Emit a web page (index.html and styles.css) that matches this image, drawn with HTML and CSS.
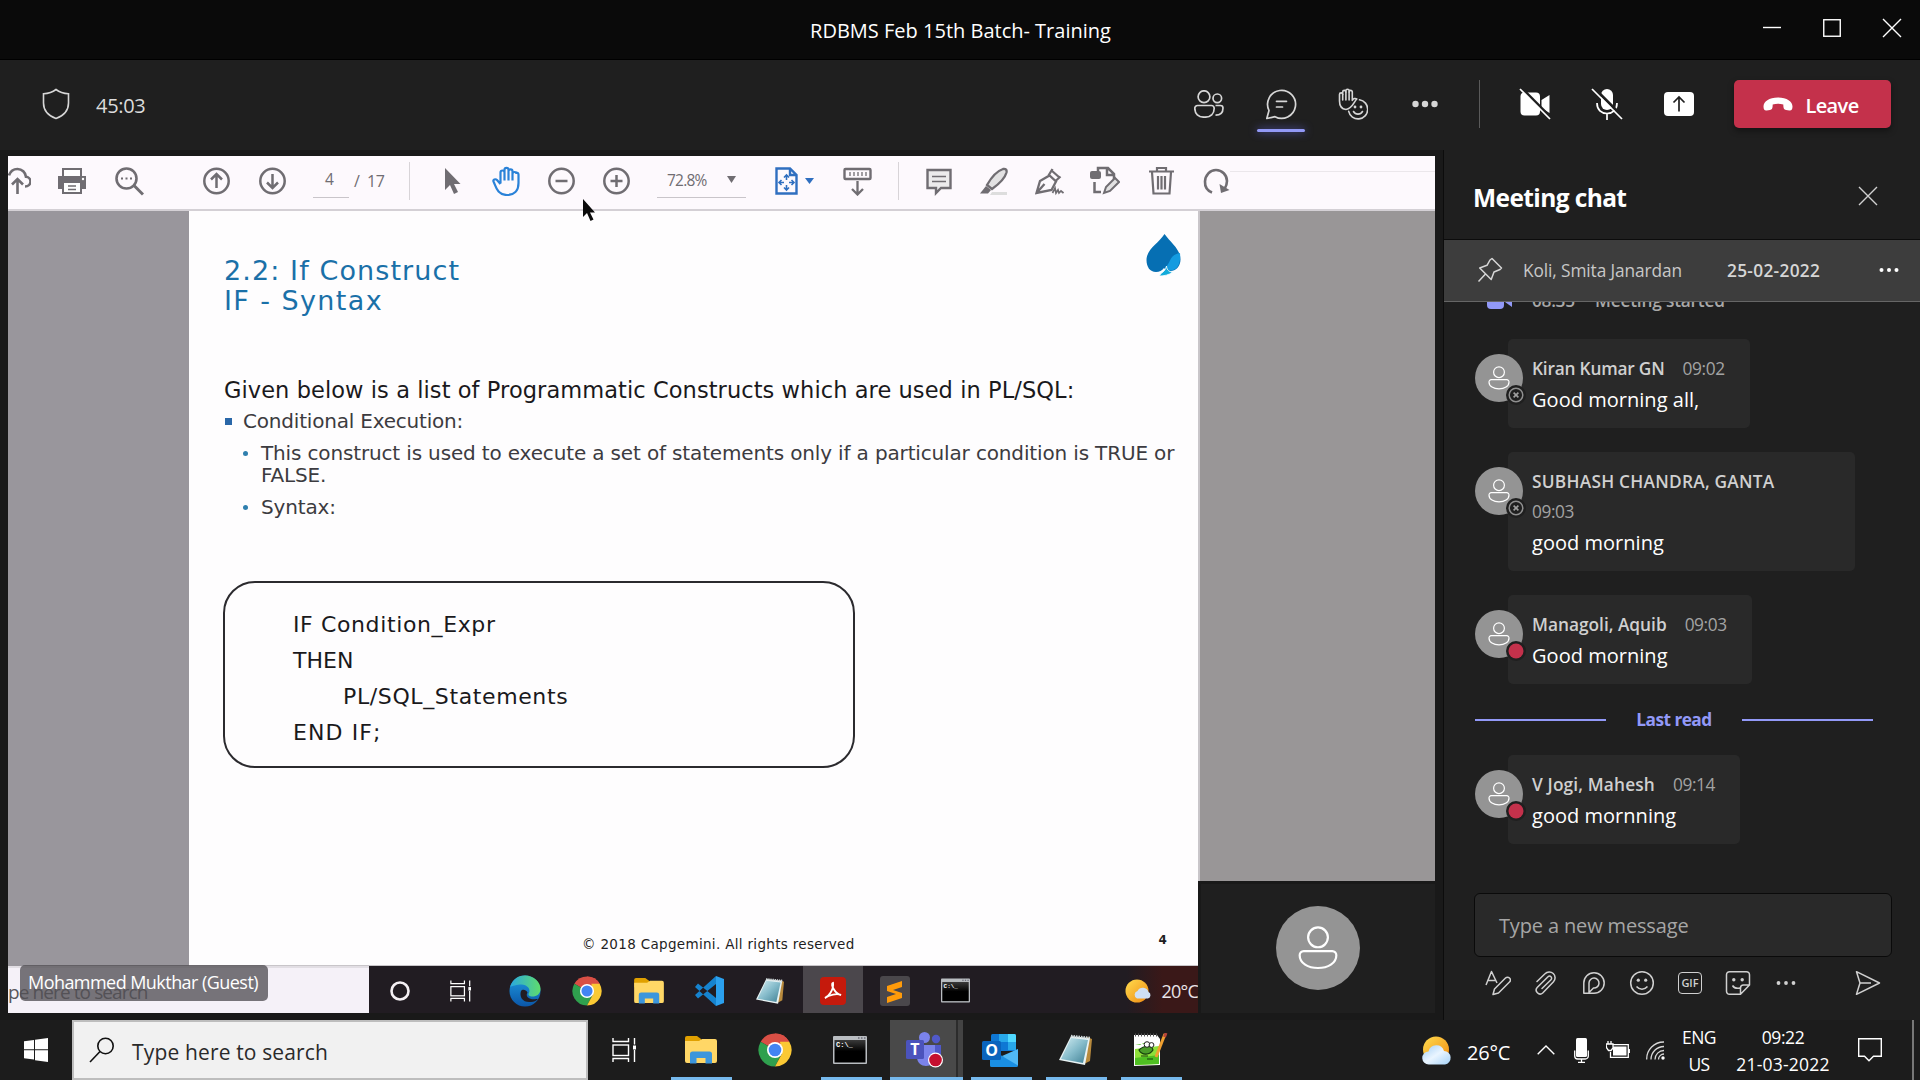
FILE: index.html
```
<!DOCTYPE html>
<html lang="en">
<head>
<meta charset="utf-8">
<title>RDBMS Feb 15th Batch- Training</title>
<link rel="stylesheet" href="styles.css">
</head>
<body>
<svg class="defs" width="0" height="0" aria-hidden="true">
  <defs>
    <linearGradient id="sun" x1="0" y1="0" x2="1" y2="1"><stop offset="0" stop-color="#ffdc4e"/><stop offset="1" stop-color="#f08a12"/></linearGradient>
    <linearGradient id="cloud" x1="0" y1="0" x2="1" y2="1"><stop offset="0" stop-color="#9fcdf5"/><stop offset=".5" stop-color="#eaf5ff"/><stop offset="1" stop-color="#a5d2f8"/></linearGradient>
    <linearGradient id="pad" x1="0" y1="0" x2="1" y2="1"><stop offset="0" stop-color="#d5eef3"/><stop offset=".5" stop-color="#86bccb"/><stop offset="1" stop-color="#3f7f93"/></linearGradient>
    <linearGradient id="edge1" x1="0" y1="0" x2="1" y2="0"><stop offset="0" stop-color="#2aa8e0"/><stop offset="1" stop-color="#5fdc6c"/></linearGradient>
    <linearGradient id="edge2" x1="0" y1="0" x2="0" y2="1"><stop offset="0" stop-color="#1f9be0"/><stop offset="1" stop-color="#0b56a8"/></linearGradient>
    <linearGradient id="cmdg" x1="0" y1="0" x2="0" y2="1"><stop offset="0" stop-color="#3a3a3a"/><stop offset=".5" stop-color="#000"/></linearGradient>
  </defs>
  <symbol id="person" viewBox="0 0 24 24"><g fill="none" stroke="#fff" stroke-width="1.2"><circle cx="12" cy="6.2" r="5.4"/><path d="M4.2 13.7h15.6a2.2 2.2 0 0 1 2.2 2.2c0 4.4-4.6 7-10 7s-10-2.6-10-7a2.2 2.2 0 0 1 2.2-2.2z"/></g></symbol>
  <symbol id="chrome" viewBox="0 0 34 34">
    <path d="M17 17 2.7 8.75A16.5 16.5 0 0 1 31.3 8.75z" fill="#d94f45"/>
    <path d="M17 .5A16.5 16.5 0 0 1 31.3 8.75H17z" fill="#d94f45"/>
    <path d="M2.7 8.75A16.5 16.5 0 0 0 17 33.5L23.5 21 17 17z" fill="#2fa04e"/>
    <path d="M31.3 8.75A16.5 16.5 0 0 1 17 33.5L24 20.5 22 8.75z" fill="#fbc934"/>
    <circle cx="17" cy="17" r="8" fill="#fff"/><circle cx="17" cy="17" r="6.3" fill="#4284f3"/>
  </symbol>
  <symbol id="folder" viewBox="0 0 32 28">
    <path d="M0 2a2 2 0 0 1 2-2h10l4 3v7H0z" fill="#e0a000"/><path d="M0 5h14l3-2h13a2 2 0 0 1 2 2v20a2 2 0 0 1-2 2H2a2 2 0 0 1-2-2z" fill="#ffd766"/>
    <path d="M5 27.500V18a2.500 2.500 0 0 1 2.500-2.500h17A2.500 2.500 0 0 1 27 18v9.500h-6.500V22h-9v5.500z" fill="#3c96dc"/>
  </symbol>
  <symbol id="cmd" viewBox="0 0 34 28">
    <rect width="34" height="28" rx="1" fill="#b9bdc1"/><rect x="1.500" y="4" width="31" height="22.500" fill="url(#cmdg)"/><path d="M25 2h1.500M28 2h1.500M31 2h1.500" stroke="#445"/>
    <text x="3" y="11" class="prompt">C:\_</text>
  </symbol>
  <symbol id="notepad" viewBox="0 0 33 32">
    <path d="M28 3l5 2-2 22-6 3z" fill="#b88a3d"/><path d="M12 2l19 2-5 27L0 26z" fill="#e9f3f4"/><path d="M12 4l17 2-5 23L2 25z" fill="url(#pad)"/><path d="M12 2l19 2" stroke="#cfd8da" stroke-width="2.500" stroke-dasharray="1.500 1"/>
  </symbol>
  <symbol id="taskview" viewBox="0 0 24 24"><g fill="none" stroke="#fff" stroke-width="1.400"><rect x="1" y="7" width="15.500" height="10.500"/><path d="M1 0v3.500h15.500V0M1 24v-3.500h15.500V24M22.500 0v6.500M22.500 12v12"/></g><rect x="21" y="7.500" width="3" height="4" fill="#fff"/></symbol>
  <symbol id="offline" viewBox="0 0 20 20"><circle cx="10" cy="10" r="10" fill="#1f1f1f"/><circle cx="10" cy="10" r="6.800" fill="none" stroke="#8f8f8f" stroke-width="1.500"/><path d="M7.600 7.600l4.800 4.800m0-4.800l-4.800 4.800" stroke="#a0a0a0" stroke-width="1.600"/></symbol>
  <symbol id="busy" viewBox="0 0 20 20"><circle cx="10" cy="10" r="10" fill="#1f1f1f"/><circle cx="10" cy="10" r="7.500" fill="#c4314b"/></symbol>
</svg>

<header class="titlebar">
  <h1 class="window-title">RDBMS Feb 15th Batch- Training</h1>
  <div class="window-buttons">
    <svg width="20" height="20" viewBox="0 0 20 20"><path d="M1 9.500h18" stroke="#fff" stroke-width="1.400"/></svg>
    <svg width="20" height="20" viewBox="0 0 20 20"><rect x="1.750" y="1.750" width="16.500" height="16.500" fill="none" stroke="#fff" stroke-width="1.400"/></svg>
    <svg width="20" height="20" viewBox="0 0 20 20"><path d="M1 1l18 18M19 1L1 19" stroke="#fff" stroke-width="1.400"/></svg>
  </div>
</header>

<nav class="callbar">
  <svg class="shield" width="28" height="32" viewBox="0 0 28 32"><path d="M14 1.500c3.500 2.700 7.500 4 12.500 4.200V15c0 7.500-4.500 12.500-12.500 15.500C6 27.500 1.500 22.500 1.500 15V5.700C6.500 5.500 10.500 4.200 14 1.500z" fill="none" stroke="#d6d6d6" stroke-width="1.600"/></svg>
  <span class="timer">45:03</span>
  <div class="call-actions">
    <span class="slot"><svg width="30" height="28" viewBox="0 0 30 28"><g fill="none" stroke="#d6d6d6" stroke-width="1.700"><circle cx="10" cy="6.700" r="5.900"/><circle cx="23.300" cy="8.300" r="4.300"/><path d="M3.500 15.500h14a2.700 2.700 0 0 1 2.700 2.700c0 5.500-3.500 9-9.700 9s-9.700-3.500-9.700-9a2.700 2.700 0 0 1 2.700-2.700zM21.500 15.500h5a2.500 2.500 0 0 1 2.500 2.500c0 4.500-2.800 7.200-7.500 7.200"/></g></svg></span>
    <span class="slot active"><svg width="32" height="32" viewBox="0 0 32 32"><g fill="none" stroke="#d6d6d6" stroke-width="1.700" stroke-linecap="round" stroke-linejoin="round"><path d="M4 22.500A14 14 0 1 1 10 28.700L1.800 30.500z"/><path d="M11.500 13.300h10M11.500 19h6"/></g></svg></span>
    <span class="slot"><svg width="30" height="32" viewBox="0 0 30 32"><g fill="none" stroke="#d6d6d6" stroke-width="1.600" stroke-linecap="round" stroke-linejoin="round"><path d="M8 21.500C3.500 21 1.500 17.500 1.500 13V6.500a1.600 1.600 0 0 1 3.200 0V4a1.600 1.600 0 0 1 3.200 0V2.800a1.600 1.600 0 0 1 3.200 0V4a1.600 1.600 0 0 1 3.200 0v8.500c1-2 3-2.600 4.500-1.500-2.500 2.200-4.300 9.500-10.800 10.500z"/><path d="M4.700 6.500V12M7.900 4v8M11.100 4v8"/><path d="M21.500 11.800a9.600 9.600 0 1 1-10.800 11.500"/><path d="M15.500 23.500c2 3.500 7 3.500 9 0"/></g><circle cx="17" cy="19" r="1.400" fill="#d6d6d6"/><circle cx="23" cy="19" r="1.400" fill="#d6d6d6"/></svg></span>
    <span class="slot"><svg width="28" height="8" viewBox="0 0 28 8"><g fill="#d6d6d6"><circle cx="4.500" cy="4" r="3.200"/><circle cx="14" cy="4" r="3.200"/><circle cx="23.500" cy="4" r="3.200"/></g></svg></span>
    <span class="divider"></span>
    <span class="slot"><svg width="32" height="32" viewBox="0 0 32 32"><path d="M5.500 4.500H17a4 4 0 0 1 4 4v15a4 4 0 0 1-4 4H5.500a4 4 0 0 1-4-4v-15a4 4 0 0 1 4-4zM22.500 12l8-5v18l-8-5z" fill="#fff"/><path d="M2.500 0L32 30" stroke="#1f1f1f" stroke-width="3"/><path d="M1 1l30 30" stroke="#fff" stroke-width="1.700"/></svg></span>
    <span class="slot"><svg width="32" height="32" viewBox="0 0 32 32"><rect x="10" y="1" width="12" height="21" rx="6" fill="#fff"/><path d="M6 15c0 7 4.500 10.500 10 10.500S26 22 26 15M16 25.500V32" fill="none" stroke="#fff" stroke-width="1.700"/><path d="M3 0l30 30" stroke="#1f1f1f" stroke-width="3"/><path d="M1 1l30 30" stroke="#fff" stroke-width="1.700"/></svg></span>
    <span class="slot"><svg width="30" height="24" viewBox="0 0 30 24"><rect width="30" height="24" rx="4" fill="#fff"/><path d="M15 19.500V5.500M9.500 10.500L15 5l5.500 5.500" fill="none" stroke="#1f1f1f" stroke-width="1.700"/></svg></span>
    <button class="leave"><svg width="30" height="14" viewBox="0 0 30 14"><path d="M15 .5C24 .5 29.500 4.500 29.500 9.500c0 3-1 4.300-3.200 4L23 13c-1.800-.3-2.500-1.500-2.600-3.500l-.1-2C17 6.500 13 6.500 9.700 7.500l-.1 2C9.500 11.500 8.800 12.700 7 13l-3.300.5C1.500 13.800.5 12.500.5 9.500.5 4.500 6 .5 15 .5z" fill="#fff"/></svg><span>Leave</span></button>
  </div>
</nav>

<main class="meeting">
  <section class="stage">
    <div class="share">
      <div class="pdf-toolbar">
        <svg class="t-cloud" width="23" height="30" viewBox="0 0 23 30"><path d="M-2 19.500h2M17 20.500c3 0 5.500-2 5.500-5S20 11 18 10.800C17.500 6.500 14 3 9.500 3S2 6 1 9.500M9.500 28V14M4 18.500L9.500 13l5.500 5.500" fill="none" stroke="#706d72" stroke-width="2.600"/></svg>
        <svg class="t-print" width="30" height="30" viewBox="0 0 30 30"><path d="M1 10h28v13H1z" fill="#706d72"/><path d="M6 10V3h18v7M6 16h18v11H6z" fill="#fff" stroke="#706d72" stroke-width="2"/><path d="M11 20h8M11 23.500h8" stroke="#706d72" stroke-width="1.400"/><circle cx="26" cy="13" r="1.200" fill="#fff"/></svg>
        <svg class="t-find" width="29" height="30" viewBox="0 0 29 30"><circle cx="11.500" cy="12.500" r="10" fill="none" stroke="#706d72" stroke-width="2.600"/><path d="M19 19.500l9 9" stroke="#706d72" stroke-width="3"/><path d="M6 12.500h11.500" stroke="#706d72" stroke-width="2" stroke-dasharray="2 2.500"/></svg>
        <svg class="t-up" width="27" height="30" viewBox="0 0 27 30"><circle cx="13.500" cy="15" r="12.200" fill="none" stroke="#706d72" stroke-width="2.500"/><path d="M13.500 22V8.500M8 13.500L13.500 8l5.500 5.500" fill="none" stroke="#706d72" stroke-width="2.500"/></svg>
        <svg class="t-down" width="27" height="30" viewBox="0 0 27 30"><circle cx="13.500" cy="15" r="12.200" fill="none" stroke="#706d72" stroke-width="2.500"/><path d="M13.500 8v13.500M8 16.500l5.500 5.500 5.500-5.500" fill="none" stroke="#706d72" stroke-width="2.500"/></svg>
        <span class="t-page">4</span>
        <span class="t-total">/&nbsp; 17</span>
        <span class="t-rule t-rule-a"></span>
        <svg class="t-arrow" width="17" height="28" viewBox="0 0 17 28"><path d="M1 1v22l5-5 4 9 4-2-4-8h6.500z" fill="#706d72"/></svg>
        <svg class="t-hand" width="29" height="30" viewBox="0 0 29 30"><path d="M8.500 17.500V6.500a2 2 0 0 1 4 0V3.800a2 2 0 0 1 4 0v1.500a2 2 0 0 1 4 0V8a2 2 0 0 1 4 0M12.500 5v9.500M16.500 5v9.500M20.500 6v8.500M8.500 18L5 14c-1.500-1.500-4.300-.5-3.500 1.500C4 20.500 5 29 15 29c7 0 11.500-4 11.500-12V8.500a2 2 0 0 0-2.500-1.800" fill="none" stroke="#2a82d8" stroke-width="2.200"/></svg>
        <svg class="t-minus" width="27" height="30" viewBox="0 0 27 30"><circle cx="13.500" cy="15" r="12.200" fill="none" stroke="#706d72" stroke-width="2.500"/><path d="M7.500 15h12" stroke="#706d72" stroke-width="2.500"/></svg>
        <svg class="t-plus" width="27" height="30" viewBox="0 0 27 30"><circle cx="13.500" cy="15" r="12.200" fill="none" stroke="#706d72" stroke-width="2.500"/><path d="M7.500 15h12M13.500 9v12" stroke="#706d72" stroke-width="2.500"/></svg>
        <span class="t-zoom">72.8%<svg width="9" height="7" viewBox="0 0 9 7"><path d="M0 0h9L4.500 7z" fill="#706d72"/></svg></span>
        <svg class="t-fit" width="23" height="28" viewBox="0 0 23 28"><path d="M1.500 1.500H15l6.500 6.500v18.500h-20zM15 1.500V8h6.500" fill="none" stroke="#2f6fc0" stroke-width="2.400"/><path d="M11.500 8.500v4.500M11.500 18v4.500M4.500 15.500H9M14 15.500h4.500M9 10.500l2.500-2.500 2.500 2.500M9 20.500l2.500 2.500 2.500-2.500M6.500 13L4 15.500 6.500 18M16.500 13l2.500 2.500-2.500 2.500" fill="none" stroke="#2f6fc0" stroke-width="1.600"/></svg>
        <svg class="t-caret" width="9" height="6" viewBox="0 0 9 6"><path d="M0 0h9L4.500 6z" fill="#2f6fc0"/></svg>
        <svg class="t-ruler" width="29" height="30" viewBox="0 0 29 30"><rect x="1.500" y="3" width="26" height="10" rx="1" fill="none" stroke="#706d72" stroke-width="2.400"/><path d="M7 6v4M11 6v4M15 6v4M19 6v4M23 6v4" stroke="#706d72" stroke-width="1.300"/><path d="M14.500 15v13M9 23l5.500 5.500L20 23" fill="none" stroke="#706d72" stroke-width="2.300"/></svg>
        <span class="t-rule t-rule-b"></span>
        <svg class="t-comment" width="26" height="30" viewBox="0 0 26 30"><path d="M1.500 4h23v18H15l-5 5v-5H1.500z" fill="#ecebec" stroke="#706d72" stroke-width="2.400"/><path d="M6 10.500h14M6 15.500h14" stroke="#706d72" stroke-width="1.700"/></svg>
        <svg class="t-pen" width="28" height="30" viewBox="0 0 28 30"><path d="M12 26h15v3H10z" fill="#ddd"/><path d="M7 19C11 12 17 5 23 3c3-.5 4 1 3.500 3.500C25 12 19 18 12 23z" fill="#e2e1e2" stroke="#706d72" stroke-width="2.300"/><path d="M6 20l5 4-3 3.500H0z" fill="#706d72"/></svg>
        <svg class="t-sign" width="29" height="30" viewBox="0 0 29 30"><path d="M1.500 27L5 15l9.500-5.500 6.500 6-4.500 8.500zM2 26.500l7.500-8.500M13.500 9.500L17.500 3M20.500 15l5-4.500M16.500 4.500l8 7" fill="none" stroke="#706d72" stroke-width="2.300"/><path d="M17.500 27l2.500-5 1 5 2-3 1 3 2-2 2.500 2" fill="none" stroke="#706d72" stroke-width="1.700"/></svg>
        <svg class="t-edit" width="30" height="30" viewBox="0 0 30 30"><path d="M8 5V2h10l6 6v5M17 2v7h7M4.500 16v10H11" fill="none" stroke="#706d72" stroke-width="2.500"/><rect y="5" width="11" height="8" rx="2" fill="#706d72"/><path d="M14 27l2-6 9-9 4 4-9 9z" fill="#e2e1e2" stroke="#706d72" stroke-width="2"/></svg>
        <svg class="t-trash" width="25" height="30" viewBox="0 0 25 30"><path d="M0 5.500h25M8 5V2h9v3M3 6l1.500 21.500h16L22 6M9 10v13.500M12.500 10v13.500M16 10v13.500" fill="none" stroke="#706d72" stroke-width="2.200"/></svg>
        <svg class="t-rotate" width="27" height="28" viewBox="0 0 27 28"><path d="M9 25.500C4 23.500 1.800 19 2 14.500 2.300 8 7 3 13 3s11 5 11 11c0 3-1 5.500-2.500 8" fill="none" stroke="#706d72" stroke-width="2.600"/><path d="M16.500 17l1.500 9 8.500-3z" fill="#706d72"/></svg>
        <span class="t-tail"></span>
      </div>

      <div class="pdf-body">
        <article class="slide">
          <svg class="spade" width="35" height="42" viewBox="0 0 35 42"><path d="M18.500 0C24 8 34.500 15 34.500 25.500c0 7-5 11.500-10 11.500-3 0-5-1-6.500-3-2 2.500-4.500 4-8 4C4 38 .5 33 .5 26 .5 15 13 9 18.500 0z" fill="#066fb3"/><path d="M34 19c1 10-2 17-9 17.500-3 .2-5-1-6-3 6-4 4-13 15-14.500z" fill="#149be0"/><path d="M20.500 32c.5 5 3 5.500 6 6-3 3-9 4-13 4 .5-3 6-4 7-10z" fill="#12abdb" stroke="#fff" stroke-width=".8"/></svg>
          <h2 class="slide-title"><span>2.2: If Construct</span><span class="subtitle">IF - Syntax</span></h2>
          <p class="lead">Given below is a list of Programmatic Constructs which are used in PL/SQL:</p>
          <p class="level-one">Conditional Execution:</p>
          <p class="level-two">This construct is used to execute a set of statements only if a particular condition is TRUE or<br>FALSE.</p>
          <p class="level-two">Syntax:</p>
          <div class="code-box">
            <span class="wide">IF Condition_Expr</span>
            <span>THEN</span>
            <span class="wide indent">PL/SQL_Statements</span>
            <span class="wider">END IF;</span>
          </div>
          <footer class="slide-footer"><span>© 2018 Capgemini. All rights reserved</span><b>4</b></footer>
        </article>
      </div>

      <div class="remote-taskbar">
        <div class="remote-search">pe here to search</div>
        <svg class="r-cortana" width="20" height="24" viewBox="0 0 20 24"><circle cx="10" cy="12" r="8.500" fill="none" stroke="#f4f0f4" stroke-width="2.600"/></svg>
        <svg class="r-view" width="21" height="22"><use href="#taskview"/></svg>
        <svg class="r-edge" width="32" height="32" viewBox="0 0 32 32"><circle cx="16" cy="16" r="15.500" fill="url(#edge2)"/><path d="M1 12C4 3 10 .5 16 .5 25 .5 31.500 7 31.500 14c0 5-4 7.500-8 7.500-3 0-5-1.500-3.500-3.500C22 14 18 9.500 12.500 9.500 8 9.500 3 11 1 12z" fill="url(#edge1)"/><path d="M12 16c-2 6 2 12 10 11 3 0 5-1 7-3-2 0-8 1-10-1.500-2-2-1-4-.5-5C17 14 13 14 12 16z" fill="#221d22"/></svg>
        <svg class="r-chrome" width="30" height="30"><use href="#chrome"/></svg>
        <svg class="r-folder" width="30" height="26"><use href="#folder"/></svg>
        <svg class="r-code" width="31" height="32" viewBox="0 0 31 32"><path d="M22 1l8 3v24l-8 3z" fill="#2ba0ee"/><path d="M1 20l3 3.500L22 9V1zM1 12l3-3.500L22 23v8z" fill="#1683cf"/></svg>
        <svg class="r-note" width="28" height="30"><use href="#notepad"/></svg>
        <span class="r-acrobat"><svg width="26" height="28" viewBox="0 0 26 28"><rect width="26" height="28" rx="4" fill="#c51a0c"/><path d="M5 21c3-1 9-8 8-15-3 1 2 11 8 12-4-2-12 0-16 3z" fill="none" stroke="#fff" stroke-width="1.900"/></svg></span>
        <svg class="r-sublime" width="30" height="30" viewBox="0 0 30 30"><rect width="30" height="30" rx="3" fill="#4a474b"/><path d="M22 5v6l-9 3 9 3v5L7 27v-6l9-3-9-3v-5z" fill="#ff9b0a"/></svg>
        <svg class="r-cmd" width="29" height="25"><use href="#cmd"/></svg>
        <svg class="r-weather" width="26" height="24" viewBox="0 0 26 24"><circle cx="12" cy="12" r="11.500" fill="url(#sun)"/><path d="M12 19.500a4 4 0 0 1 .5-7.500 6 6 0 0 1 11 1 3.500 3.500 0 0 1-.5 6.500z" fill="#cfe0f5"/></svg>
        <span class="r-temp">20°C</span>
      </div>

      <svg class="pointer" width="14" height="24" viewBox="0 0 14 24"><path d="M1 1v18l4-4 3.500 8 3-1.500-3.500-7h5z" fill="#0b0b0b"/></svg>
      <div class="presenter">Mohammed Mukthar (Guest)</div>
      <div class="self-tile"><div class="tile-inner"><span class="self-avatar"><svg width="44" height="44"><use href="#person"/></svg></span></div></div>
    </div>
  </section>

  <aside class="chat">
    <header class="chat-header"><h2>Meeting chat</h2><svg width="20" height="20" viewBox="0 0 20 20"><path d="M1 1l18 18M19 1L1 19" stroke="#d0d0d0" stroke-width="1.400"/></svg></header>
    <div class="pinned">
      <svg class="pin" width="26" height="26" viewBox="0 0 26 26"><path d="M15 1.500l9.500 9.500-1.500 1.500-6 2.500-2.800 7.500L2.700 11 10 8.300 13 3zM8.500 17L1.500 24.500" fill="none" stroke="#d6d6d6" stroke-width="1.500" stroke-linejoin="round"/></svg>
      <span class="pinned-name">Koli, Smita Janardan</span>
      <span class="pinned-date">25-02-2022</span>
      <svg class="pinned-more" width="20" height="6" viewBox="0 0 20 6"><g fill="#fff"><circle cx="2.500" cy="3" r="2"/><circle cx="10" cy="3" r="2"/><circle cx="17.500" cy="3" r="2"/></g></svg>
    </div>
    <div class="messages">
      <div class="event"><svg width="25" height="20" viewBox="0 0 25 20"><rect width="17" height="20" rx="4" fill="#9299f7"/><path d="M18 7l7-5v16l-7-5z" fill="#9299f7"/></svg><span class="event-time">08:35</span><span class="event-text">Meeting started</span></div>
      <div class="message">
        <div class="avatar"><svg width="24" height="24"><use href="#person"/></svg><svg class="status" width="20" height="20"><use href="#offline"/></svg></div>
        <div class="bubble"><div class="meta"><b class="tight">Kiran Kumar GN</b><time>09:02</time></div><p>Good morning all,</p></div>
      </div>
      <div class="message">
        <div class="avatar"><svg width="24" height="24"><use href="#person"/></svg><svg class="status" width="20" height="20"><use href="#offline"/></svg></div>
        <div class="bubble stacked"><div class="meta"><b class="caps">SUBHASH CHANDRA, GANTA</b><time>09:03</time></div><p>good morning</p></div>
      </div>
      <div class="message">
        <div class="avatar"><svg width="24" height="24"><use href="#person"/></svg><svg class="status" width="20" height="20"><use href="#busy"/></svg></div>
        <div class="bubble"><div class="meta"><b>Managoli, Aquib</b><time>09:03</time></div><p>Good morning</p></div>
      </div>
      <div class="last-read"><span>Last read</span></div>
      <div class="message">
        <div class="avatar"><svg width="24" height="24"><use href="#person"/></svg><svg class="status" width="20" height="20"><use href="#busy"/></svg></div>
        <div class="bubble"><div class="meta"><b class="loose">V Jogi, Mahesh</b><time>09:14</time></div><p>good mornning</p></div>
      </div>
    </div>
    <div class="composer">
      <div class="input">Type a new message</div>
      <div class="tools">
        <span><svg width="26" height="26" viewBox="0 0 26 26"><g fill="none" stroke="#d0d0d0" stroke-width="1.500" stroke-linejoin="round"><path d="M1 15L6.500 1.500 12 13M3.500 10.500h7.500M8 24.500l1.500-5.500L20.500 8a2.700 2.700 0 0 1 4 4L13.500 23z"/></g></svg></span>
        <span><svg width="24" height="26" viewBox="0 0 24 26"><path d="M3 11.500l8-7.700a5.700 5.700 0 0 1 8.500 8L8.700 23a3.900 3.900 0 0 1-5.500-5.500L14 6.800a2 2 0 0 1 3 3L8 18.500" fill="none" stroke="#d0d0d0" stroke-width="1.500" stroke-linecap="round"/></svg></span>
        <span><svg width="24" height="24" viewBox="0 0 24 24"><path d="M1.800 22.200V12A10.200 10.200 0 1 1 12 22.200zM7 21.500V12a5 5 0 1 1 4.500 5L7.500 21" fill="none" stroke="#d0d0d0" stroke-width="1.500" stroke-linejoin="round"/></svg></span>
        <span><svg width="26" height="26" viewBox="0 0 26 26"><circle cx="13" cy="13" r="11.300" fill="none" stroke="#d0d0d0" stroke-width="1.500"/><circle cx="9.300" cy="10.200" r="1.600" fill="#d0d0d0"/><circle cx="16.700" cy="10.200" r="1.600" fill="#d0d0d0"/><path d="M7.500 16.500c3 3.500 8 3.500 11 0" fill="none" stroke="#d0d0d0" stroke-width="1.500"/></svg></span>
        <span><i class="gif">GIF</i></span>
        <span><svg width="26" height="26" viewBox="0 0 26 26"><g fill="none" stroke="#d0d0d0" stroke-width="1.500" stroke-linejoin="round"><path d="M4.500 1.700h17a3 3 0 0 1 3 3V15l-9 9.300h-11a3 3 0 0 1-3-3V4.700a3 3 0 0 1 3-3zM24.500 15h-6a3 3 0 0 0-3 3v6.300M7.500 15.500c1.500 2.500 4 3.300 7.500 2.500"/></g><circle cx="8.800" cy="9.800" r="1.700" fill="#d0d0d0"/><circle cx="17.200" cy="9.800" r="1.700" fill="#d0d0d0"/></svg></span>
        <span><svg width="20" height="6" viewBox="0 0 20 6"><g fill="#d0d0d0"><circle cx="2.500" cy="3" r="1.900"/><circle cx="10" cy="3" r="1.900"/><circle cx="17.500" cy="3" r="1.900"/></g></svg></span>
        <span class="send"><svg width="26" height="26" viewBox="0 0 26 26"><path d="M1.500 1.700L24.500 13 1.500 24.300 5 13zM5 13h11" fill="none" stroke="#d0d0d0" stroke-width="1.500" stroke-linejoin="round"/></svg></span>
      </div>
    </div>
  </aside>
</main>

<footer class="taskbar">
  <div class="start"><svg width="24" height="24" viewBox="0 0 24 24"><path d="M0 3.300L10 2v9.300H0zM11 1.800L24 0v11.300H11zM0 12.300h10v9.200L0 20.300zM11 12.300h13V24l-13-1.700z" fill="#fff"/></svg></div>
  <div class="search"><svg width="26" height="26" viewBox="0 0 26 26"><circle cx="16.500" cy="9" r="7.700" fill="none" stroke="#111" stroke-width="1.600"/><path d="M11 14.500L1 25" stroke="#111" stroke-width="1.600"/></svg><span>Type here to search</span></div>
  <svg class="view" width="24" height="24"><use href="#taskview"/></svg>
  <div class="app open first"><svg width="32" height="28"><use href="#folder"/></svg></div>
  <div class="app"><svg width="34" height="34"><use href="#chrome"/></svg></div>
  <div class="app open"><svg width="34" height="28"><use href="#cmd"/></svg></div>
  <div class="app open current"><svg width="38" height="36" viewBox="0 0 38 36"><circle cx="18.500" cy="5.500" r="5.500" fill="#7b83eb"/><circle cx="30" cy="7" r="4.200" fill="#5059c9"/><path d="M24 13h11v11c0 4-4 6-8 5z" fill="#5059c9"/><path d="M11 13h18v12c0 12-18 12-18 0z" fill="#7b83eb"/><rect y="8" width="18" height="19" rx="1.500" fill="#4b53bc"/><text x="9" y="23" class="logo-letter">T</text><circle cx="29.500" cy="28" r="7.500" fill="#fff"/><circle cx="29.500" cy="28" r="6.300" fill="#c50f2f"/></svg></div>
  <div class="app open after"><svg width="36" height="33" viewBox="0 0 36 33"><path d="M9 1.500A1.500 1.500 0 0 1 10.500 0h22A1.500 1.500 0 0 1 34 1.500V17H9z" fill="#0f78d4"/><path d="M17 0h9v8h-9z" fill="#28a8ea"/><path d="M26 0h6.500A1.500 1.500 0 0 1 34 1.500V8h-8z" fill="#50d9ff"/><path d="M26 8h8v8h-8z" fill="#28a8ea"/><path d="M8 15l14 8 14-8v16.500a1.500 1.500 0 0 1-1.500 1.500h-25A1.500 1.500 0 0 1 8 31.500z" fill="#1a8fe3"/><path d="M36 15v16.500L20 22z" fill="#50b8f5"/><rect y="7" width="19" height="19" rx="1.500" fill="#0a64bd"/><text x="9.500" y="22" class="logo-letter">O</text></svg></div>
  <div class="app open"><svg width="33" height="32"><use href="#notepad"/></svg></div>
  <div class="app open"><svg width="35" height="34" viewBox="0 0 35 34"><path d="M1 2h23l3 4v26L1 33z" fill="#fff"/><path d="M2 16l24-3v18L2 32z" fill="#8ee03a"/><path d="M2 12h5l3-2h4M2 25l24-3v9L2 32z" fill="#4fbf22"/><path d="M2 2h22" stroke="#555" stroke-width="3" stroke-dasharray="1 2"/><path d="M6 17c5-5 13-5 14 0-3 5-11 6-14 0zM8 23h7M14 26h6" fill="#4b9c2a" stroke="#143c0c" stroke-width="1.200"/><circle cx="14" cy="11.500" r="2.800" fill="#fff" stroke="#222"/><circle cx="18.500" cy="12" r="2.400" fill="#fff" stroke="#222"/><path d="M32 1L23 24" stroke="#f0a030" stroke-width="3"/><path d="M33 0l-1.500 4" stroke="#b8473a" stroke-width="3"/></svg></div>
  <svg class="weather" width="30" height="29" viewBox="0 0 30 29"><circle cx="14" cy="13.500" r="13" fill="url(#sun)"/><path d="M7 28.500a6.500 6.500 0 0 1-.5-13A8 8 0 0 1 22 15a6.800 6.800 0 0 1 1 13.500z" fill="url(#cloud)"/></svg>
  <span class="temp">26°C</span>
  <svg class="chev" width="18" height="10" viewBox="0 0 18 10"><path d="M.7 9.300L9 1l8.300 8.300" fill="none" stroke="#fff" stroke-width="1.400"/></svg>
  <svg class="mic" width="15" height="25" viewBox="0 0 15 25"><rect x="2" width="11" height="19" rx="1.500" fill="#fff"/><path d="M.7 12.500v5.500a3 3 0 0 0 3 3h7.600a3 3 0 0 0 3-3v-5.500M7.500 21v3.300M4 24.300h7" fill="none" stroke="#fff" stroke-width="1.300"/></svg>
  <svg class="battery" width="24" height="18" viewBox="0 0 24 18"><path d="M7 3.700h15.300v12.600H4.500V11M23.300 8v4" fill="none" stroke="#fff" stroke-width="1.300"/><rect x="7" y="5.500" width="13.500" height="9" fill="#fff"/><path d="M0 3h7v4L5 9.500H2.500L.7 7zM2 0v3M5 0v3" fill="#1c1c1c" stroke="#fff" stroke-width="1.300"/></svg>
  <svg class="wifi" width="19" height="19" viewBox="0 0 19 19"><g fill="none" stroke="#d8d8d8" stroke-width="1.300"><path d="M.7 18.500A17 17 0 0 1 18 1M5 18.500A13 13 0 0 1 18 5.500M9 18.500a9 9 0 0 1 9-9M12.500 18.500a5.500 5.500 0 0 1 5.500-5.500"/></g><circle cx="17" cy="17" r="1.700" fill="#fff"/></svg>
  <div class="lang"><span>ENG</span><span>US</span></div>
  <div class="clock"><span class="hour">09:22</span><span>21-03-2022</span></div>
  <svg class="notify" width="24" height="24" viewBox="0 0 24 24"><path d="M.7.700h22.600v17.600H15.500L11 22.800l-4.500-4.500H.7z" fill="none" stroke="#fff" stroke-width="1.400"/></svg>
  <span class="desktop-edge"></span>
</footer>
</body>
</html>
```
FILE: styles.css
```
* { box-sizing: border-box; }
body {
  margin: 0; width: 1920px; height: 1080px; overflow: hidden;
  display: flex; flex-direction: column;
  background: #1c1c1c; color: #fff;
  font-family: "Open Sans", "Noto Sans", sans-serif;
}
h1, h2, p { margin: 0; font-weight: 400; }
svg { display: block; flex: none; }
.defs { position: absolute; }

/* Window title */
.titlebar {
  height: 60px; flex: none; display: grid; grid-template-columns: 1fr auto 1fr; align-items: center;
  background: #0a0a0a; border-bottom: 1px solid #000;
}
.window-title { grid-column: 2; font-size: 20px; line-height: 30px; padding: 2px 0 0 1px; }
.window-buttons { display: flex; justify-content: flex-end; gap: 40px; padding: 0 18px 3px 0; }

/* Call controls */
.callbar { height: 90px; flex: none; display: flex; align-items: center; background: #1f1f1f; padding: 0 29px 0 42px; }
.shield { margin-bottom: 2px; }
.timer { margin-left: 26px; font-size: 20px; letter-spacing: -.3px; color: #dcdcdc; }
.call-actions { margin-left: auto; display: flex; align-items: center; height: 88px; padding-bottom: 2px; }
.slot { width: 72px; height: 56px; display: flex; align-items: center; justify-content: center; position: relative; }
.slot.active::after {
  content: ""; position: absolute; left: 12px; bottom: 0; width: 48px; height: 3px;
  border-radius: 2px; background: #9299f7; box-shadow: 0 0 8px #5b5fc7;
}
.divider { width: 1px; height: 48px; background: #5a5a5a; margin: 0 19px 0 18px; }
.leave {
  width: 157px; height: 48px; margin-left: 19px; border: 0; border-radius: 5px; padding: 0 3px 0 0;
  display: flex; align-items: center; justify-content: center; gap: 12px;
  background: #c4314b; color: #fff; font: 600 20px/1 "Open Sans", sans-serif; letter-spacing: -.6px;
  box-shadow: 0 3px 6px #0006;
}
.leave span { padding-top: 4px; }

/* Meeting area */
.meeting { height: 870px; flex: none; display: flex; }
.stage { width: 1443px; background: #191919; padding: 6px 8px 7px; }
.share { height: 857px; position: relative; display: flex; flex-direction: column; overflow: hidden; }

.pdf-toolbar {
  height: 55px; flex: none; display: flex; align-items: center; padding-bottom: 3px;
  background: #fdf9fd; border-bottom: 2px solid #d4d0d5; color: #706d72; font-size: 15.500px;
}
.t-print { margin-left: 26px; }
.t-find { margin-left: 28px; }
.t-up { margin-left: 59px; }
.t-down { margin-left: 29px; }
.t-page { margin-left: 27px; width: 36px; height: 34px; line-height: 30px; padding-left: 12px; border-bottom: 1px solid #c9c5ca; }
.t-total { margin-left: 5px; width: 31px; white-space: nowrap; font-size: 16px; letter-spacing: -.4px; }
.t-rule { width: 1px; height: 38px; background: #d8d4d8; }
.t-rule-a { margin-left: 24px; }
.t-arrow { margin-left: 34px; }
.t-hand { margin-left: 31px; }
.t-minus { margin-left: 27px; }
.t-plus { margin-left: 28px; }
.t-zoom {
  margin-left: 27px; width: 89px; height: 34px; border-bottom: 1px solid #c9c5ca; padding: 0 10px 2px 10px;
  display: flex; align-items: center; justify-content: space-between; letter-spacing: -.8px;
}
.t-fit { margin-left: 29px; }
.t-caret { margin-left: 7px; }
.t-ruler { margin-left: 29px; }
.t-rule-b { margin-left: 26px; }
.t-comment { margin-left: 27px; }
.t-pen { margin-left: 28px; }
.t-sign { margin-left: 27px; }
.t-edit { margin-left: 26px; }
.t-trash { margin-left: 29px; }
.t-rotate { margin-left: 29px; }
.t-tail { flex: 1; height: 20px; border-top: 1px solid #ebe7eb; }

.pdf-body { height: 755px; flex: none; background: linear-gradient(90deg, #99969c 50%, #999697 50%); padding: 0 235px 0 181px; }
.slide {
  height: 100%; background: #fefdfe; padding: 45px 12px 0 35px; position: relative;
  border-right: 2px solid #c9c6ca; border-bottom: 1px solid #c8c5c9;
  font-family: Verdana, "DejaVu Sans", sans-serif; color: #3c3b40;
}
.spade { position: absolute; right: 17px; top: 23px; }
.slide-title { font-size: 27px; line-height: 30px; letter-spacing: 1.1px; color: #1a70a8; }
.slide-title span { display: block; }
.slide-title .subtitle { letter-spacing: 1.4px; }
.lead { margin-top: 59px; font-size: 22.500px; line-height: 30px; letter-spacing: .07px; color: #1a191c; white-space: nowrap; }
.level-one { margin-top: 2px; margin-bottom: 7px; padding-left: 19px; font-size: 20px; line-height: 28px; letter-spacing: -.2px; position: relative; }
.level-one::before { content: ""; position: absolute; left: 1px; top: 11px; width: 7px; height: 7px; background: #2a67a8; }
.level-two { padding-left: 37px; font-size: 20px; line-height: 22px; letter-spacing: -.15px; white-space: nowrap; position: relative; }
.level-two::before { content: ""; position: absolute; left: 19px; top: 9px; width: 5px; height: 5px; border-radius: 50%; background: #2f7fae; }
.level-two + .level-two { margin-top: 10px; }
.code-box {
  margin: 63px 0 0 -1px; width: 632px; height: 187px; border: 2px solid #2b2a2e; border-radius: 32px;
  padding: 24px 0 0 68px; font-size: 22px; line-height: 36px; color: #1a191c;
}
.code-box span { display: block; }
.code-box .wide { letter-spacing: .62px; }
.code-box .wider { letter-spacing: 1.1px; }
.code-box .indent { padding-left: 50px; }
.slide-footer { margin-top: 166px; display: flex; font-size: 13.500px; line-height: 20px; letter-spacing: .32px; color: #1f1e22; padding-left: 358px; }
.slide-footer b { margin-left: 304px; margin-top: -4px; font-size: 12px; }

.remote-taskbar { height: 47px; flex: none; width: 1190px; display: flex; align-items: center; overflow: hidden; background: linear-gradient(90deg, #211c22 94%, #3a1818 97%); }
.remote-taskbar > svg { margin-top: 2px; }
.remote-search { width: 361px; height: 47px; background: #f5f1f8; color: #59565c; font-size: 19px; line-height: 48px; letter-spacing: -.9px; border-top: 2px solid #e2dee4; }
.r-cortana { margin-left: 21px; }
.r-view { margin-left: 40px; }
.r-edge { margin-left: 38px; }
.r-chrome { margin-left: 31px; }
.r-folder { margin-left: 32px; }
.r-code { margin-left: 30px; }
.r-note { margin-left: 31px; }
.r-acrobat { margin-left: 19px; width: 60px; height: 47px; background: #4b474c; display: flex; align-items: center; justify-content: center; padding-top: 2px; }
.r-sublime { margin-left: 17px; }
.r-cmd { margin-left: 31px; }
.r-weather { margin-left: 155px; }
.r-temp { margin-left: 11px; padding-top: 2px; font-size: 18px; letter-spacing: -.8px; color: #e9e4e9; }

.pointer { position: absolute; left: 574px; top: 42px; }
.presenter {
  position: absolute; left: 12px; top: 809px; width: 248px; height: 36px; border-radius: 5px;
  background: rgba(82, 80, 84, .78); font-size: 18px; line-height: 34px; padding-left: 8px; letter-spacing: -.55px; white-space: nowrap;
}
.self-tile { position: absolute; right: 0; bottom: 0; width: 237px; height: 132px; background: #191919; padding: 3px 0 0 3px; }
.tile-inner { height: 100%; background: #1f1f1f; display: flex; align-items: center; justify-content: center; padding-bottom: 2px; }
.self-avatar { width: 84px; height: 84px; border-radius: 50%; background: #949494; display: flex; align-items: center; justify-content: center; }

/* Chat */
.chat { flex: 1; display: flex; flex-direction: column; background: #1f1f1f; border-left: 1px solid #0c0c0c; }
.chat-header { height: 90px; flex: none; display: flex; align-items: center; justify-content: space-between; padding: 2px 42px 0 29px; border-bottom: 1px solid #0c0c0c; }
.chat-header h2 { font-size: 24.500px; font-weight: 700; letter-spacing: -.6px; padding-top: 3px; }
.pinned { height: 62px; flex: none; display: flex; align-items: center; padding-left: 33px; background: #3d3d3d; border-bottom: 1px solid #666; color: #c8c8c8; font-size: 17.300px; }
.pin { margin-bottom: 2px; }
.pinned-name { margin-left: 20px; width: 204px; letter-spacing: -.1px; }
.pinned-date { width: 152px; font-weight: 600; letter-spacing: .3px; color: #d6d6d6; }
.pinned-more { margin-bottom: 1px; }
.messages { flex: 1; overflow: hidden; }
.event { display: flex; align-items: center; height: 24px; margin-top: -13px; padding-left: 43px; font-size: 17.300px; font-weight: 600; line-height: 24px; color: #a8a8a8; }
.event svg { margin-bottom: 4px; }
.event-time { margin-left: 20px; width: 63px; letter-spacing: -.3px; }
.event-text { letter-spacing: -.2px; }
.message { display: flex; align-items: flex-start; padding-left: 31px; margin-top: 24px; }
.event + .message { margin-top: 26px; }
.avatar { width: 48px; height: 48px; margin-top: 15px; border-radius: 50%; background: #949494; display: flex; align-items: center; justify-content: center; position: relative; z-index: 1; }
.status { position: absolute; left: 31px; top: 31px; }
.bubble { margin-left: -15px; padding: 18px 25px 12px 24px; border-radius: 5px; background: #292929; }
.meta { display: flex; gap: 18px; font-size: 17.300px; line-height: 24px; white-space: nowrap; }
.meta b { font-weight: 600; color: #d0d0d0; letter-spacing: 0; }
.meta .tight { letter-spacing: -.2px; }
.meta .loose { letter-spacing: .15px; }
.meta .caps { letter-spacing: .25px; }
.meta time { color: #a3a3a3; letter-spacing: -.4px; }
.bubble p { margin-top: 3px; font-size: 20px; line-height: 32px; letter-spacing: .03px; }
.bubble.stacked { width: 347px; }
.stacked .meta { flex-direction: column; gap: 0; }
.stacked time { margin-top: 3px; margin-bottom: -3px; line-height: 30px; }
.last-read { height: 71px; display: flex; align-items: center; padding-left: 31px; }
.last-read::before, .last-read::after { content: ""; width: 131px; height: 2px; background: #9299f7; }
.last-read span { width: 136px; text-align: center; font-size: 17.300px; font-weight: 700; letter-spacing: -.55px; color: #9299f7; }
.last-read + .message { margin-top: 0; }
.composer { height: 127px; flex: none; padding: 0 28px 0 30px; }
.input { height: 64px; border: 1px solid #0a0a0a; border-radius: 6px; background: #292929; color: #a6a6a6; font-size: 20px; line-height: 63px; letter-spacing: -.15px; padding-left: 24px; }
.tools { display: flex; height: 52px; }
.tools span { width: 48px; display: flex; align-items: center; justify-content: center; }
.tools .send { margin-left: auto; }
.gif { width: 24px; height: 22px; border: 1.500px solid #d0d0d0; border-radius: 4px; font: 600 11px/19px "Open Sans", sans-serif; text-align: center; color: #d0d0d0; }

/* Desktop taskbar */
.taskbar { height: 60px; flex: none; display: flex; align-items: center; background: #1c1c1c; }
.start { width: 72px; display: flex; justify-content: center; }
.search { width: 516px; height: 60px; display: flex; align-items: center; background: #f1f1f1; border: 2px solid #bdbdbd; color: #2a2a2a; font-size: 21px; letter-spacing: .15px; padding: 0 0 0 15px; }
.search span { margin: 4px 0 0 17px; }
.view { margin-left: 24px; }
.app { width: 61px; height: 60px; margin-left: 14px; padding-right: 3px; display: flex; align-items: center; justify-content: center; }
.app.first { margin-left: 35px; padding-right: 2px; }
.app.open { box-shadow: inset 0 -3px #76b9ed; }
.app.current { width: 73px; margin-left: 8px; background: linear-gradient(90deg, #494949 66px, #2c2c2c 66px, #2c2c2c 68px, #434343 68px); }
.app.after { margin-left: 8px; }
.weather { margin-left: 240px; }
.temp { margin-left: 15px; width: 44px; font-size: 20px; letter-spacing: -.2px; padding-top: 4px; white-space: nowrap; }
.chev { margin-left: 26px; }
.mic { margin-left: 19px; }
.battery { margin-left: 17px; }
.wifi { margin-left: 16px; }
.lang, .clock { display: flex; flex-direction: column; align-items: center; font-size: 17.500px; line-height: 27px; padding-top: 1px; }
.lang { margin-left: 17px; width: 34px; letter-spacing: -.6px; }
.clock { margin-left: 20px; width: 94px; letter-spacing: .2px; white-space: nowrap; }
.hour { letter-spacing: -.4px; }
.notify { margin-left: 28px; }
.desktop-edge { margin-left: 30px; width: 2px; height: 60px; background: #777; }
.prompt { font: 700 7px "Liberation Mono", monospace; fill: #fff; }
.logo-letter { font: 700 16px "Open Sans", sans-serif; fill: #fff; text-anchor: middle; }
```
